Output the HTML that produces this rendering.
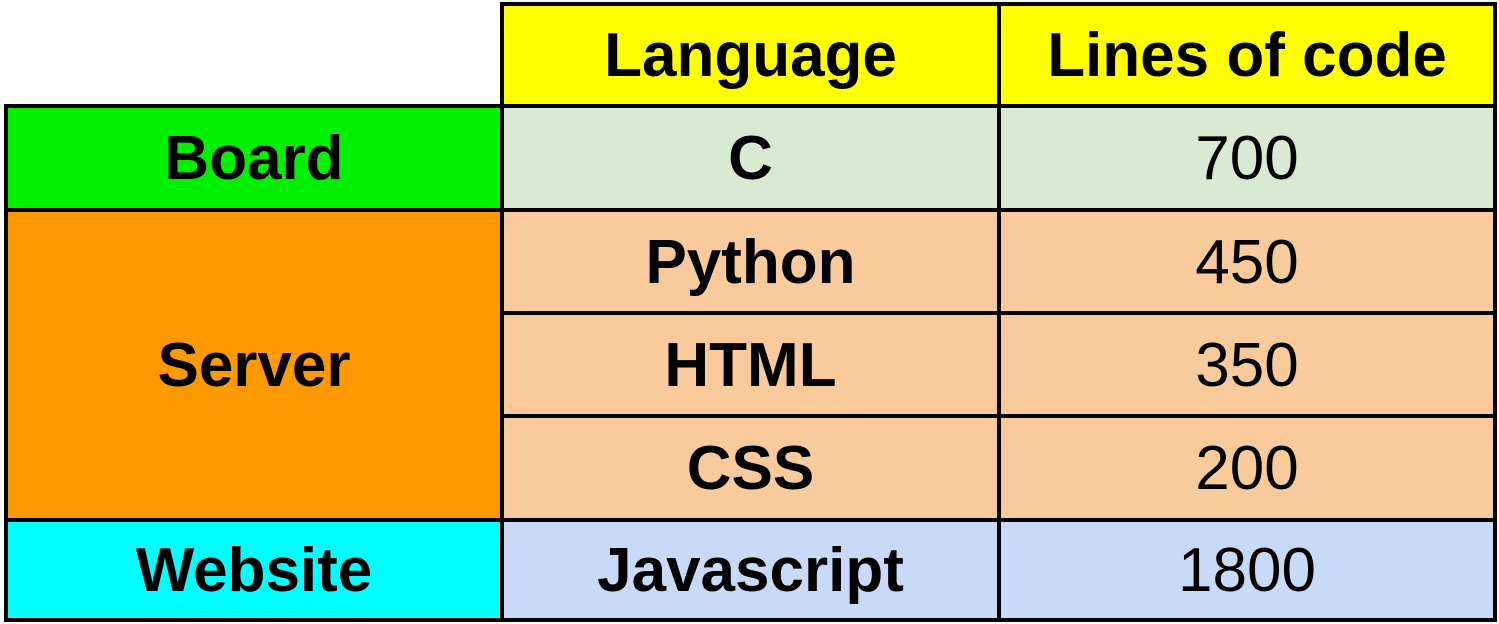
<!DOCTYPE html>
<html><head><style>
body{margin:0;width:1499px;height:624px;background:#fff;position:relative;overflow:hidden;font-family:"Liberation Sans",Arial,sans-serif;}
.c{position:absolute;box-sizing:border-box;border:4px solid #000;display:flex;align-items:center;justify-content:center;font-size:62px;color:#000;padding-top:1px;}
.b{font-weight:bold;}
</style></head><body>
<div class="c b" style="left:500px;top:2px;width:501px;height:106px;background:#ffff00">Language</div>
<div class="c b" style="left:997px;top:2px;width:500px;height:106px;background:#ffff00">Lines of code</div>

<div class="c b" style="left:4px;top:104px;width:500px;height:108px;background:#00f000">Board</div>
<div class="c b" style="left:500px;top:104px;width:501px;height:108px;background:#d9ead3">C</div>
<div class="c" style="left:997px;top:104px;width:500px;height:108px;background:#d9ead3">700</div>

<div class="c b" style="left:4px;top:208px;width:500px;height:314px;background:#ff9900">Server</div>
<div class="c b" style="left:500px;top:208px;width:501px;height:107px;background:#f9cb9c">Python</div>
<div class="c" style="left:997px;top:208px;width:500px;height:107px;background:#f9cb9c">450</div>
<div class="c b" style="left:500px;top:311px;width:501px;height:107px;background:#f9cb9c">HTML</div>
<div class="c" style="left:997px;top:311px;width:500px;height:107px;background:#f9cb9c">350</div>
<div class="c b" style="left:500px;top:414px;width:501px;height:108px;background:#f9cb9c">CSS</div>
<div class="c" style="left:997px;top:414px;width:500px;height:108px;background:#f9cb9c">200</div>

<div class="c b" style="left:4px;top:518px;width:500px;height:104px;background:#00ffff">Website</div>
<div class="c b" style="left:500px;top:518px;width:501px;height:104px;background:#c9daf8">Javascript</div>
<div class="c" style="left:997px;top:518px;width:500px;height:104px;background:#c9daf8">1800</div>
</body></html>
